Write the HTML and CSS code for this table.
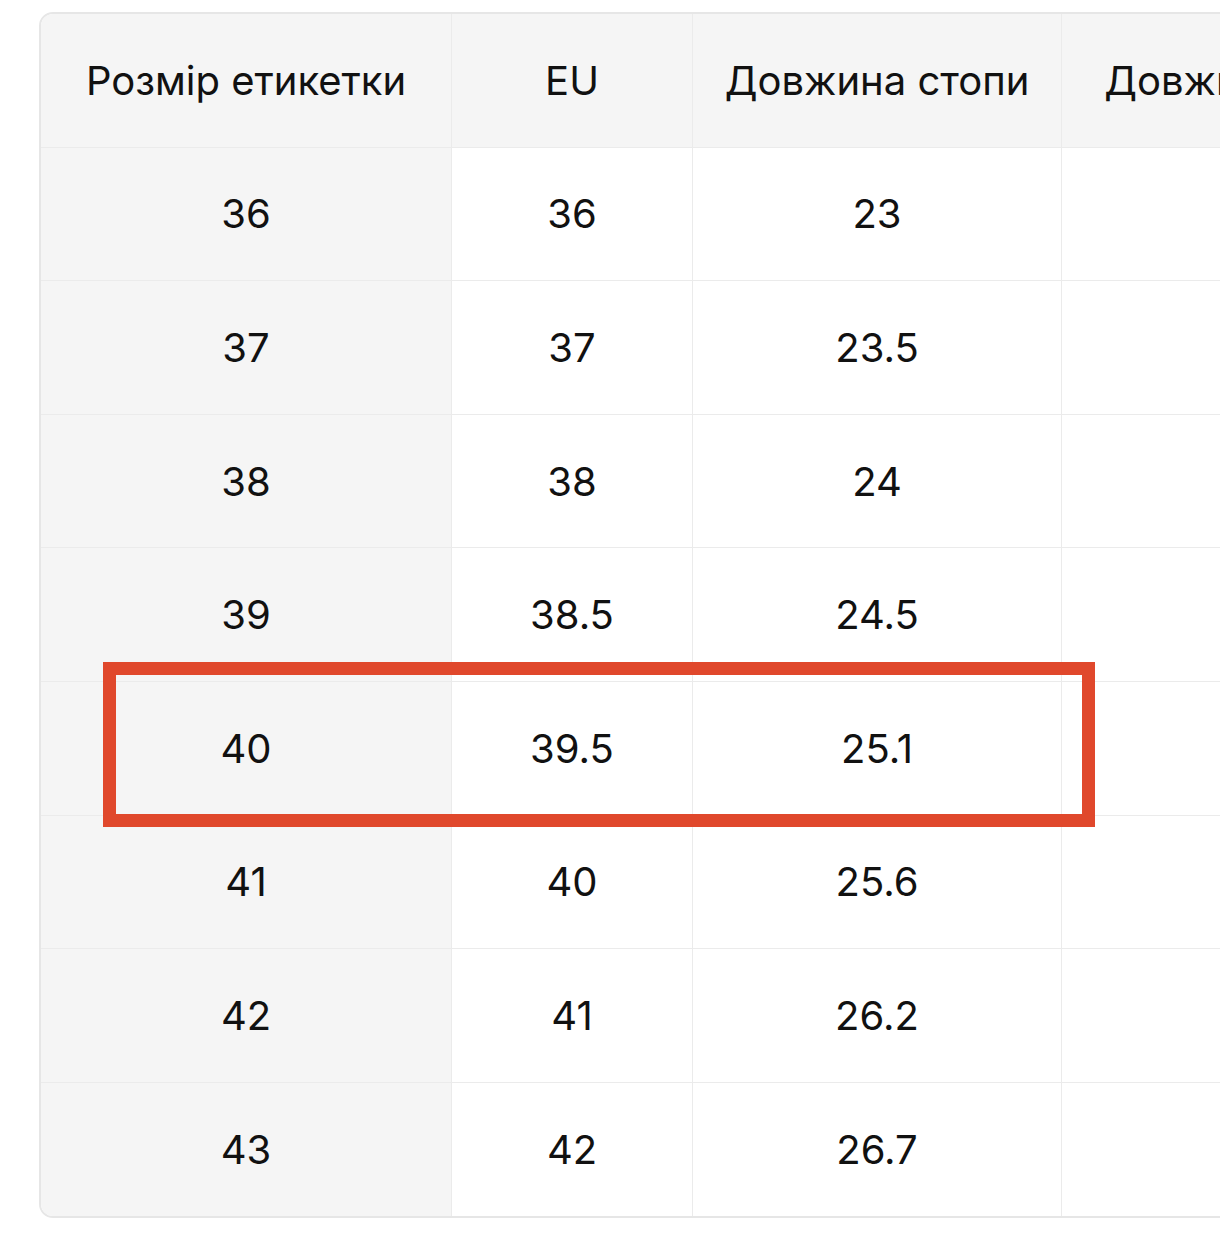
FILE: index.html
```html
<!DOCTYPE html>
<html lang="uk">
<head>
<meta charset="utf-8">
<link rel="stylesheet" href="styles.css">
</head>
<body>
<div class="page">
  <div class="table-wrap">
    <div class="grid">
      <div class="cell head first">Розмір етикетки</div>
      <div class="cell head">EU</div>
      <div class="cell head">Довжина стопи</div>
      <div class="cell head last">Довжина устілки</div>

      <div class="cell first">36</div><div class="cell">36</div><div class="cell">23</div><div class="cell last"></div>
      <div class="cell first">37</div><div class="cell">37</div><div class="cell">23.5</div><div class="cell last"></div>
      <div class="cell first">38</div><div class="cell">38</div><div class="cell">24</div><div class="cell last"></div>
      <div class="cell first">39</div><div class="cell">38.5</div><div class="cell">24.5</div><div class="cell last"></div>
      <div class="cell first">40</div><div class="cell">39.5</div><div class="cell">25.1</div><div class="cell last"></div>
      <div class="cell first">41</div><div class="cell">40</div><div class="cell">25.6</div><div class="cell last"></div>
      <div class="cell first">42</div><div class="cell">41</div><div class="cell">26.2</div><div class="cell last"></div>
      <div class="cell first bottom">43</div><div class="cell bottom">42</div><div class="cell bottom">26.7</div><div class="cell last bottom"></div>
    </div>
    <div class="highlight"></div>
  </div>
</div>
</body>
</html>
```
FILE: styles.css
```css
html, body {
  margin: 0;
  padding: 0;
  background: #ffffff;
  overflow: hidden;
}
body {
  width: 1220px;
  height: 1237px;
  font-family: Inter, "Noto Sans", "Liberation Sans", sans-serif;
  color: #111111;
}
.page {
  padding: 12px 0 0 39px;
}
.table-wrap {
  position: relative;
  width: 1500px;
  border: 2px solid #e6e6e6;
  border-radius: 14px;
  overflow: hidden;
  box-sizing: border-box;
}
.grid {
  display: grid;
  grid-template-columns: 411px 241px 369px 420px;
  grid-template-rows: repeat(9, 133.6px);
}
.cell {
  display: flex;
  align-items: center;
  justify-content: center;
  background: #ffffff;
  border-right: 1px solid #ebebeb;
  border-bottom: 1px solid #ebebeb;
  font-size: 40px;
  white-space: nowrap;
  box-sizing: border-box;
}
.cell.head,
.cell.first {
  background: #f5f5f5;
}
.cell.bottom {
  border-bottom: none;
}
.highlight {
  position: absolute;
  left: 62px;
  top: 648px;
  width: 992px;
  height: 165px;
  border: 13px solid #e0482c;
  box-sizing: border-box;
}
```
